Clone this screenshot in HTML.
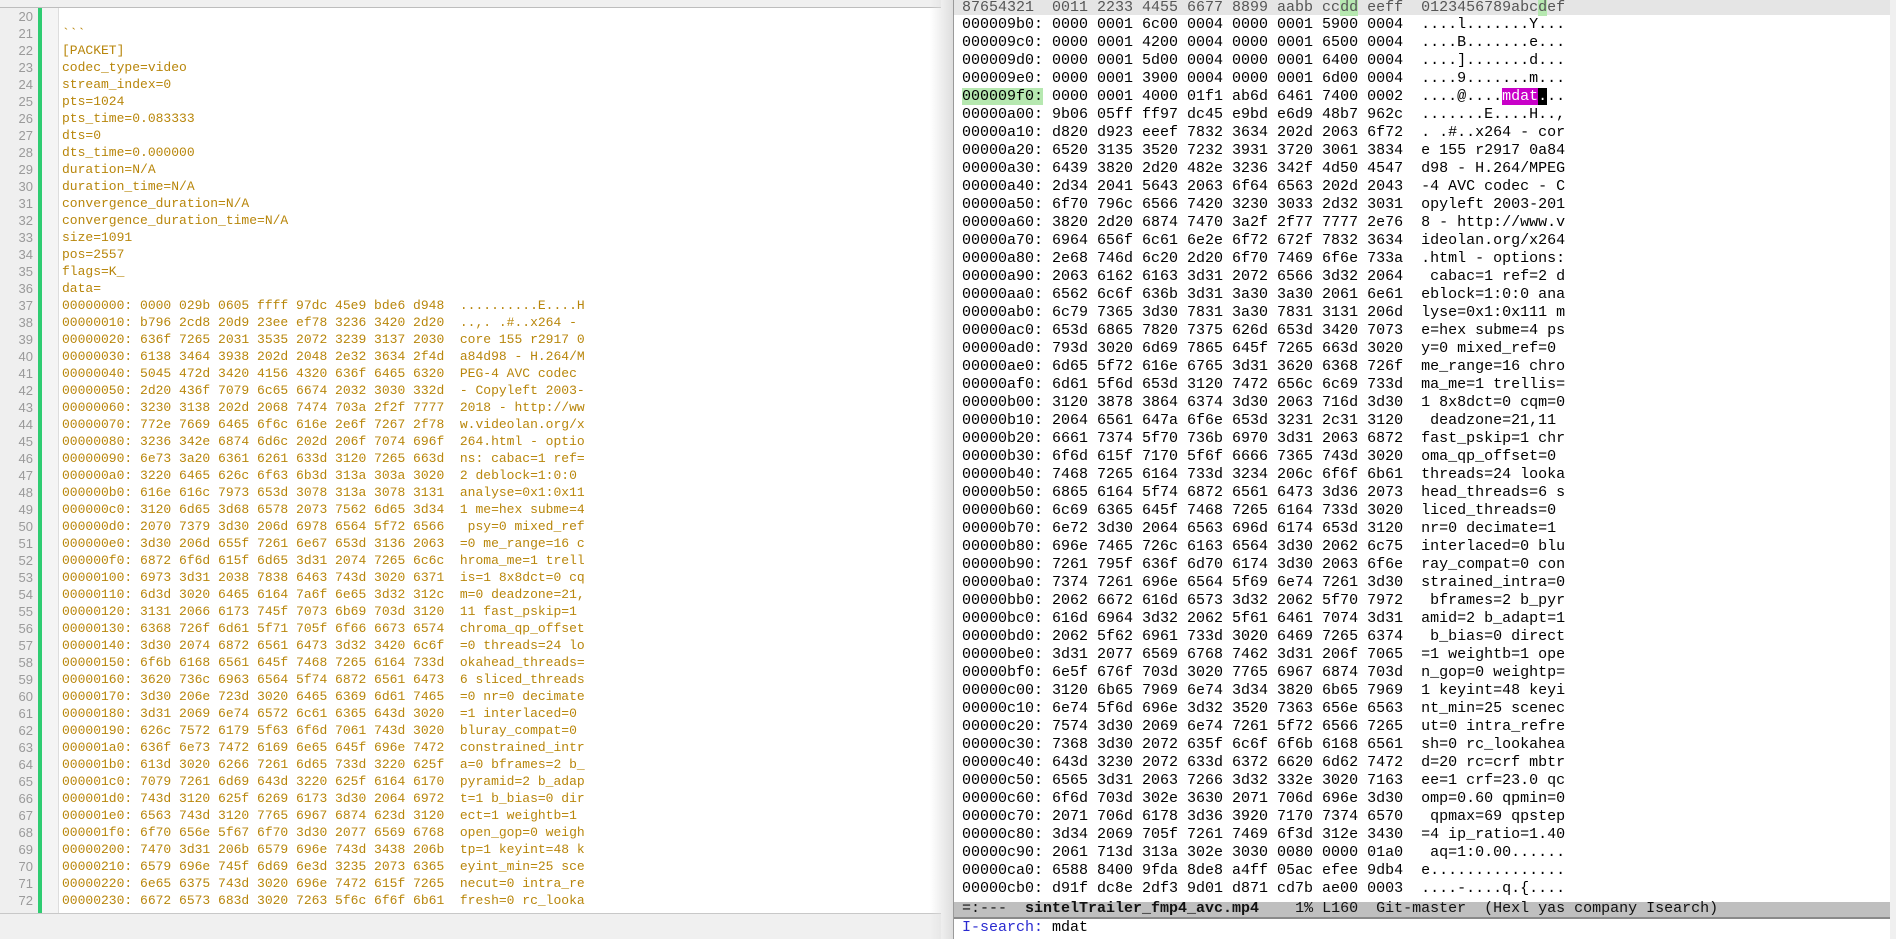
<!DOCTYPE html>
<html><head><meta charset="utf-8">
<style>
html,body{margin:0;padding:0;width:1896px;height:939px;overflow:hidden;background:#fff;position:relative}
.abs{position:absolute}
pre{margin:0;font-family:"Liberation Mono","DejaVu Sans Mono",monospace}
#left{left:0;top:0;width:941px;height:939px;background:#fff}
#topbar{left:0;top:0;width:941px;height:7px;background:#f0f0f0;border-bottom:1px solid #bdbdbd}
#gutter{left:0;top:8px;width:38px;height:906px;background:#efefef}
#green{left:38px;top:8px;width:4px;height:906px;background:#2ecc71}
#gut2{left:42px;top:8px;width:16px;height:906px;background:#f4f4f4;border-right:1px solid #ddd}
#nums{left:0;top:8px;width:33px;text-align:right;font-size:13px;line-height:17px;color:#9a9a9a;font-family:"Liberation Sans","DejaVu Sans",sans-serif}
#code{left:62px;top:8px;font-size:13px;line-height:17px;color:#b8860b}
#bottom{left:0;top:913px;width:941px;height:26px;background:#f0f0f0;border-top:1px solid #c8c8c8}
#shadow{left:930px;top:0;width:23px;height:939px;background:linear-gradient(to right,rgba(255,255,255,0),#dedede)}
#divider{left:953px;top:0;width:1px;height:939px;background:#9a9a9a}
#right{left:954px;top:0;width:936px;height:939px;background:#fff}
#rscroll{left:1890px;top:0;width:6px;height:939px;background:#f0f0f0}
#hdr{left:954px;top:0;width:936px;height:15px;background:#e5e5e5}
#hdrtxt{left:962px;top:-1px;font-size:15px;line-height:18px;color:#555}
#hex{left:962px;top:16px;font-size:15px;line-height:18px;color:#000}
#mode{left:954px;top:902px;width:936px;height:15px;background:#bfbfbf;border-bottom:2px solid #8a8a8a}
#modetxt{left:962px;top:900px;font-size:15px;line-height:18px;color:#111}
#mini{left:962px;top:919px;font-size:15px;line-height:18px;color:#000}
.g{background:#b6e8b0}
.m{background:#c800c8;color:#fff}
.k{background:#000;color:#fff}
</style></head><body>
<div id="left" class="abs"></div>
<div id="topbar" class="abs"></div>
<div id="gutter" class="abs"></div>
<div id="gut2" class="abs"></div>
<div id="green" class="abs"></div>
<pre id="nums" class="abs">20
21
22
23
24
25
26
27
28
29
30
31
32
33
34
35
36
37
38
39
40
41
42
43
44
45
46
47
48
49
50
51
52
53
54
55
56
57
58
59
60
61
62
63
64
65
66
67
68
69
70
71
72</pre>
<pre id="code" class="abs"> 
&#96;&#96;&#96;
[PACKET]
codec_type=video
stream_index=0
pts=1024
pts_time=0.083333
dts=0
dts_time=0.000000
duration=N/A
duration_time=N/A
convergence_duration=N/A
convergence_duration_time=N/A
size=1091
pos=2557
flags=K_
data=
00000000: 0000 029b 0605 ffff 97dc 45e9 bde6 d948  ..........E....H
00000010: b796 2cd8 20d9 23ee ef78 3236 3420 2d20  ..,. .#..x264 - 
00000020: 636f 7265 2031 3535 2072 3239 3137 2030  core 155 r2917 0
00000030: 6138 3464 3938 202d 2048 2e32 3634 2f4d  a84d98 - H.264/M
00000040: 5045 472d 3420 4156 4320 636f 6465 6320  PEG-4 AVC codec 
00000050: 2d20 436f 7079 6c65 6674 2032 3030 332d  - Copyleft 2003-
00000060: 3230 3138 202d 2068 7474 703a 2f2f 7777  2018 - http://ww
00000070: 772e 7669 6465 6f6c 616e 2e6f 7267 2f78  w.videolan.org/x
00000080: 3236 342e 6874 6d6c 202d 206f 7074 696f  264.html - optio
00000090: 6e73 3a20 6361 6261 633d 3120 7265 663d  ns: cabac=1 ref=
000000a0: 3220 6465 626c 6f63 6b3d 313a 303a 3020  2 deblock=1:0:0 
000000b0: 616e 616c 7973 653d 3078 313a 3078 3131  analyse=0x1:0x11
000000c0: 3120 6d65 3d68 6578 2073 7562 6d65 3d34  1 me=hex subme=4
000000d0: 2070 7379 3d30 206d 6978 6564 5f72 6566   psy=0 mixed_ref
000000e0: 3d30 206d 655f 7261 6e67 653d 3136 2063  =0 me_range=16 c
000000f0: 6872 6f6d 615f 6d65 3d31 2074 7265 6c6c  hroma_me=1 trell
00000100: 6973 3d31 2038 7838 6463 743d 3020 6371  is=1 8x8dct=0 cq
00000110: 6d3d 3020 6465 6164 7a6f 6e65 3d32 312c  m=0 deadzone=21,
00000120: 3131 2066 6173 745f 7073 6b69 703d 3120  11 fast_pskip=1 
00000130: 6368 726f 6d61 5f71 705f 6f66 6673 6574  chroma_qp_offset
00000140: 3d30 2074 6872 6561 6473 3d32 3420 6c6f  =0 threads=24 lo
00000150: 6f6b 6168 6561 645f 7468 7265 6164 733d  okahead_threads=
00000160: 3620 736c 6963 6564 5f74 6872 6561 6473  6 sliced_threads
00000170: 3d30 206e 723d 3020 6465 6369 6d61 7465  =0 nr=0 decimate
00000180: 3d31 2069 6e74 6572 6c61 6365 643d 3020  =1 interlaced=0 
00000190: 626c 7572 6179 5f63 6f6d 7061 743d 3020  bluray_compat=0 
000001a0: 636f 6e73 7472 6169 6e65 645f 696e 7472  constrained_intr
000001b0: 613d 3020 6266 7261 6d65 733d 3220 625f  a=0 bframes=2 b_
000001c0: 7079 7261 6d69 643d 3220 625f 6164 6170  pyramid=2 b_adap
000001d0: 743d 3120 625f 6269 6173 3d30 2064 6972  t=1 b_bias=0 dir
000001e0: 6563 743d 3120 7765 6967 6874 623d 3120  ect=1 weightb=1 
000001f0: 6f70 656e 5f67 6f70 3d30 2077 6569 6768  open_gop=0 weigh
00000200: 7470 3d31 206b 6579 696e 743d 3438 206b  tp=1 keyint=48 k
00000210: 6579 696e 745f 6d69 6e3d 3235 2073 6365  eyint_min=25 sce
00000220: 6e65 6375 743d 3020 696e 7472 615f 7265  necut=0 intra_re
00000230: 6672 6573 683d 3020 7263 5f6c 6f6f 6b61  fresh=0 rc_looka</pre>
<div id="bottom" class="abs"></div>
<div id="shadow" class="abs"></div>
<div id="divider" class="abs"></div>
<div id="right" class="abs"></div>
<div id="rscroll" class="abs"></div>
<div id="hdr" class="abs"></div>
<pre id="hdrtxt" class="abs">87654321  0011 2233 4455 6677 8899 aabb cc<span class="g">dd</span> eeff  0123456789abc<span class="g">d</span>ef</pre>
<pre id="hex" class="abs">000009b0: 0000 0001 6c00 0004 0000 0001 5900 0004  ....l.......Y...
000009c0: 0000 0001 4200 0004 0000 0001 6500 0004  ....B.......e...
000009d0: 0000 0001 5d00 0004 0000 0001 6400 0004  ....].......d...
000009e0: 0000 0001 3900 0004 0000 0001 6d00 0004  ....9.......m...
<span class="g">000009f0:</span> 0000 0001 4000 01f1 ab6d 6461 7400 0002  ....@....<span class="m">mdat</span><span class="k">.</span>..
00000a00: 9b06 05ff ff97 dc45 e9bd e6d9 48b7 962c  .......E....H..,
00000a10: d820 d923 eeef 7832 3634 202d 2063 6f72  . .#..x264 - cor
00000a20: 6520 3135 3520 7232 3931 3720 3061 3834  e 155 r2917 0a84
00000a30: 6439 3820 2d20 482e 3236 342f 4d50 4547  d98 - H.264/MPEG
00000a40: 2d34 2041 5643 2063 6f64 6563 202d 2043  -4 AVC codec - C
00000a50: 6f70 796c 6566 7420 3230 3033 2d32 3031  opyleft 2003-201
00000a60: 3820 2d20 6874 7470 3a2f 2f77 7777 2e76  8 - http://www.v
00000a70: 6964 656f 6c61 6e2e 6f72 672f 7832 3634  ideolan.org/x264
00000a80: 2e68 746d 6c20 2d20 6f70 7469 6f6e 733a  .html - options:
00000a90: 2063 6162 6163 3d31 2072 6566 3d32 2064   cabac=1 ref=2 d
00000aa0: 6562 6c6f 636b 3d31 3a30 3a30 2061 6e61  eblock=1:0:0 ana
00000ab0: 6c79 7365 3d30 7831 3a30 7831 3131 206d  lyse=0x1:0x111 m
00000ac0: 653d 6865 7820 7375 626d 653d 3420 7073  e=hex subme=4 ps
00000ad0: 793d 3020 6d69 7865 645f 7265 663d 3020  y=0 mixed_ref=0 
00000ae0: 6d65 5f72 616e 6765 3d31 3620 6368 726f  me_range=16 chro
00000af0: 6d61 5f6d 653d 3120 7472 656c 6c69 733d  ma_me=1 trellis=
00000b00: 3120 3878 3864 6374 3d30 2063 716d 3d30  1 8x8dct=0 cqm=0
00000b10: 2064 6561 647a 6f6e 653d 3231 2c31 3120   deadzone=21,11 
00000b20: 6661 7374 5f70 736b 6970 3d31 2063 6872  fast_pskip=1 chr
00000b30: 6f6d 615f 7170 5f6f 6666 7365 743d 3020  oma_qp_offset=0 
00000b40: 7468 7265 6164 733d 3234 206c 6f6f 6b61  threads=24 looka
00000b50: 6865 6164 5f74 6872 6561 6473 3d36 2073  head_threads=6 s
00000b60: 6c69 6365 645f 7468 7265 6164 733d 3020  liced_threads=0 
00000b70: 6e72 3d30 2064 6563 696d 6174 653d 3120  nr=0 decimate=1 
00000b80: 696e 7465 726c 6163 6564 3d30 2062 6c75  interlaced=0 blu
00000b90: 7261 795f 636f 6d70 6174 3d30 2063 6f6e  ray_compat=0 con
00000ba0: 7374 7261 696e 6564 5f69 6e74 7261 3d30  strained_intra=0
00000bb0: 2062 6672 616d 6573 3d32 2062 5f70 7972   bframes=2 b_pyr
00000bc0: 616d 6964 3d32 2062 5f61 6461 7074 3d31  amid=2 b_adapt=1
00000bd0: 2062 5f62 6961 733d 3020 6469 7265 6374   b_bias=0 direct
00000be0: 3d31 2077 6569 6768 7462 3d31 206f 7065  =1 weightb=1 ope
00000bf0: 6e5f 676f 703d 3020 7765 6967 6874 703d  n_gop=0 weightp=
00000c00: 3120 6b65 7969 6e74 3d34 3820 6b65 7969  1 keyint=48 keyi
00000c10: 6e74 5f6d 696e 3d32 3520 7363 656e 6563  nt_min=25 scenec
00000c20: 7574 3d30 2069 6e74 7261 5f72 6566 7265  ut=0 intra_refre
00000c30: 7368 3d30 2072 635f 6c6f 6f6b 6168 6561  sh=0 rc_lookahea
00000c40: 643d 3230 2072 633d 6372 6620 6d62 7472  d=20 rc=crf mbtr
00000c50: 6565 3d31 2063 7266 3d32 332e 3020 7163  ee=1 crf=23.0 qc
00000c60: 6f6d 703d 302e 3630 2071 706d 696e 3d30  omp=0.60 qpmin=0
00000c70: 2071 706d 6178 3d36 3920 7170 7374 6570   qpmax=69 qpstep
00000c80: 3d34 2069 705f 7261 7469 6f3d 312e 3430  =4 ip_ratio=1.40
00000c90: 2061 713d 313a 302e 3030 0080 0000 01a0   aq=1:0.00......
00000ca0: 6588 8400 9fda 8de8 a4ff 05ac efee 9db4  e...............
00000cb0: d91f dc8e 2df3 9d01 d871 cd7b ae00 0003  ....-....q.{....</pre>
<div id="mode" class="abs"></div>
<pre id="modetxt" class="abs">=:---  <b>sintelTrailer_fmp4_avc.mp4</b>    1% L160  Git-master  (Hexl yas company Isearch)</pre>
<pre id="mini" class="abs"><span style="color:#2a2ad0">I-search:</span> mdat</pre>
</body></html>
